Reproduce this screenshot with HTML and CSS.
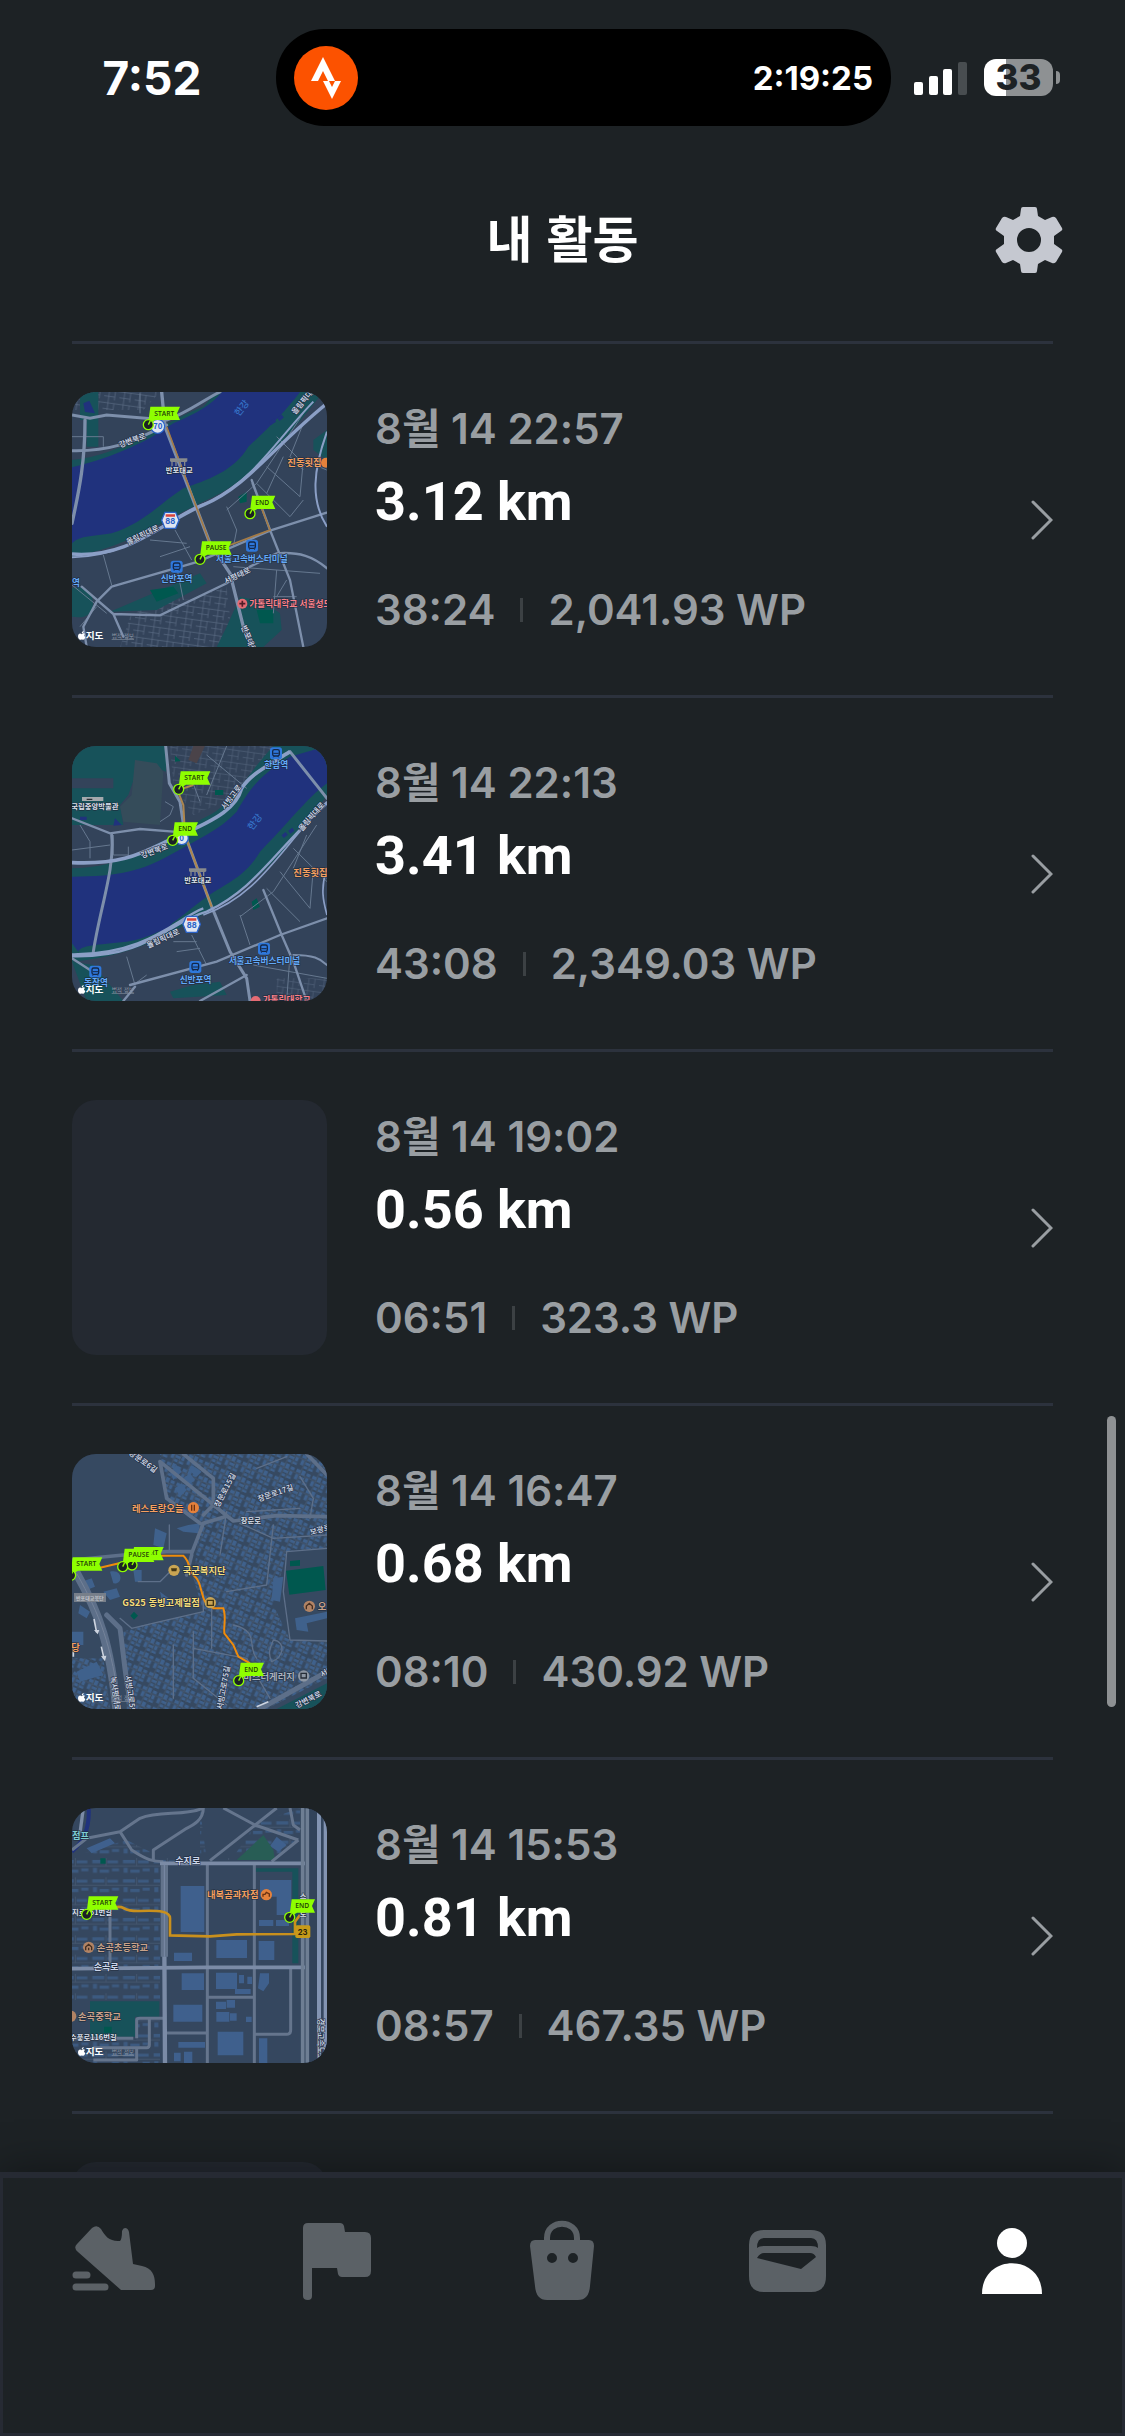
FILE: index.html
```html
<!DOCTYPE html>
<html lang="ko">
<head>
    <meta charset="UTF-8">
    <meta name="viewport" content="width=device-width, initial-scale=1.0">
    <title>내 활동</title>
    <link rel="stylesheet" href="styles.css">
</head>
<body>
    <!-- shared map parts -->
    <svg class="defs" aria-hidden="true">
        <defs>
            <g id="flag-long">
                <path d="M6-54H95L86-34L95-14H22L5-4L0-8Z" fill="#8eff00"/>
                <circle r="15" fill="#1c2124" stroke="#8eff00" stroke-width="4"/>
                <path d="M0 0L6-12" stroke="#8eff00" stroke-width="4"/>
            </g>
            <g id="flag-short">
                <path d="M6-54H76L67-34L76-14H22L5-4L0-8Z" fill="#8eff00"/>
                <circle r="15" fill="#1c2124" stroke="#8eff00" stroke-width="4"/>
                <path d="M0 0L6-12" stroke="#8eff00" stroke-width="4"/>
            </g>
            <g id="station">
                <rect x="-18" y="-18" width="36" height="36" rx="8" fill="#2f78dc"/>
                <rect x="-10" y="-11" width="20" height="19" rx="5" fill="none" stroke="#14284a" stroke-width="4"/>
                <path d="M-8 0H8M-8 12L-5 8M8 12L5 8" stroke="#14284a" stroke-width="3"/>
            </g>
            <g id="route88">
                <path d="M-16-24H16L26 0L16 24H-16L-26 0Z" fill="#dfe5f2" stroke="#2a62c8" stroke-width="4"/>
                <path d="M-14-18H14V-11H-14Z" fill="#d9453d"/>
                <text y="11" class="shield">88</text>
            </g>
            <g id="bridge-icon">
                <path d="M-24-9H24V-4H-24ZM-24-2H24M-20-4V12M-8-4V12M5-4V12M18-4V12" fill="#9b9d9f" stroke="#85888b" stroke-width="4"/>
            </g>
            <g id="apple-mark">
                <path d="M0-3C-4-8-11-5-11 3C-11 10-6 15-2 13C0 12 1 12 3 13C8 14 10 8 11 5C6 3 6-2 10-4C7-8 3-6 0-3ZM0-6C0-10 3-13 6-13C6-9 3-6 0-6Z" fill="#fff"/>
            </g>
            <pattern id="blocks" width="52" height="46" patternUnits="userSpaceOnUse" patternTransform="rotate(24)">
                <path d="M3 5h13v10H3zM20 3h11v14H20zM36 6h12v9H36zM5 21h9v16H5zM19 23h15v8H19zM38 20h9v12H38zM19 35h11v8H19zM35 36h13v7H35z" fill="#3f618c"/>
                <path d="M0 18H52M17 0V46M34 18V46" stroke="#54657c" stroke-width="2" opacity=".6"/>
            </pattern>
            <pattern id="houses" width="92" height="58" patternUnits="userSpaceOnUse">
                <path d="M5 6h36v10H5zM50 7h32v9H50zM7 30h12v14H7zM27 35h28v9H27zM64 31h21v9H64z" fill="#3f608b" opacity=".75"/>
                <path d="M0 24H92M46 0V24" stroke="#4a5b74" stroke-width="2"/>
            </pattern>
            <pattern id="lanes" width="46" height="38" patternUnits="userSpaceOnUse" patternTransform="rotate(8)">
                <path d="M0 10H46M14 0V38M0 28H32M32 10V38" stroke="#63758d" stroke-width="2" fill="none"/>
            </pattern>
        </defs>
    </svg>

    <div class="app">
        <div class="status-bar">
            <span class="clock">7:52</span>
            <div class="island">
                <svg class="island-logo" viewBox="0 0 64 64" aria-hidden="true">
                    <circle cx="32" cy="32" r="32" fill="#fc5200"/>
                    <path d="M29 11L41 35H34L29 25L24 35H17Z" fill="#fff"/>
                    <path d="M29 35H35L38 41L41 35H47L38 53Z" fill="#fff"/>
                </svg>
                <span class="island-time">2:19:25</span>
            </div>
            <svg class="signal" viewBox="0 0 54 34" aria-hidden="true">
                <rect y="21" width="9" height="13" rx="2" fill="#fff"/>
                <rect x="15" y="15" width="9" height="19" rx="2" fill="#fff"/>
                <rect x="29" y="8" width="9" height="26" rx="2" fill="#fff"/>
                <rect x="44" y="1" width="9" height="33" rx="2" fill="#484d50"/>
            </svg>
            <div class="battery"><span class="battery-level">33</span></div>
        </div>

        <header class="header">
            <h1>내 활동</h1>
            <button class="settings" type="button" aria-label="설정">
                <svg viewBox="0 0 66 66" aria-hidden="true">
                    <path fill="#c5c8d0" fill-rule="evenodd" d="M27 0H39Q41 0 41 2L42 9L49 13L56 10Q58 9 60 11L66 21Q67 23 65 24L58 29V37L65 42Q67 43 66 45L60 55Q58 57 56 56L49 53L42 57L41 64Q41 66 39 66H27Q25 66 25 64L24 57L17 53L10 56Q8 57 6 55L0 45Q-1 43 1 42L8 37V29L1 24Q-1 23 0 21L6 11Q8 9 10 10L17 13L24 9L25 2Q25 0 27 0ZM33 21A12 12 0 1 0 33 45A12 12 0 1 0 33 21Z"/>
                </svg>
            </button>
        </header>

        <main class="activities">
            <a class="activity" href="#">
                <svg class="thumb" viewBox="36 36 765 765" aria-hidden="true">
                    <path fill="#33435a" d="M36 36H801V801H36Z"/>
                    <path fill="url(#lanes)" d="M300 650L390 660L500 620L520 801H180L210 710ZM36 36H300L250 90H36Z" opacity=".8"/>
                    <path fill="#17525a" d="M36 240C190 225 300 130 430 80L470 36H790C700 150 580 300 440 360C310 420 210 500 36 530ZM60 36H115V200H80V120H60ZM36 625C80 610 110 650 95 690C80 720 50 710 36 710ZM150 695L420 580L440 610L290 690ZM500 740L540 650L610 665L660 700L665 750L610 801H470ZM760 180L801 150V240L760 210Z"/>
                    <path fill="#00584f" d="M270 630L340 620L355 640L290 665ZM535 350L560 335L560 365L540 370ZM590 690H640V730H600Z"/>
                    <path fill="#20327d" d="M36 262C170 230 270 180 340 130C410 100 455 75 485 36H720C680 90 620 150 565 200C520 275 440 300 370 325C300 370 250 430 155 460C100 470 60 465 36 490ZM70 70L88 62L105 100L75 96Z"/>
                    <path d="M630 130L645 120M655 118L668 108" stroke="#20327d" stroke-width="12"/>
                    <g fill="none" stroke="#66788f" stroke-width="3">
                        <path d="M240 40V100M36 170H130V200M130 525L155 615M345 450L395 540M500 380L530 450L520 500M500 390L590 310L730 100M590 310L690 410M620 260L720 350L730 240L800 270M650 170L740 260M670 230L620 340M690 410L730 360M575 310L630 445M730 130L690 230L730 270M270 480L380 490M300 530L390 500M520 560L780 580M650 570L640 700M640 650H710M680 600L650 650M36 615L140 700M60 740L110 680M350 560L370 660"/>
                    </g>
                    <g fill="none" stroke="#7d8fab" stroke-linecap="round">
                        <path d="M75 120C75 240 60 320 36 430M305 36L315 140L450 490L510 580L550 740L580 801" stroke-width="10"/>
                        <path d="M36 105L90 115L140 105L320 120C380 100 430 60 480 36M36 212C180 215 240 170 320 135" stroke-width="9"/>
                        <path d="M155 620L415 545L630 452L800 398M630 450L690 600L730 801M110 665L155 620M65 620L160 702L300 706L500 610L570 560M110 665L70 740L80 801M160 702L190 770M575 300L630 450M570 560L650 520C720 515 760 530 801 565" stroke-width="7"/>
                    </g>
                    <g fill="none" stroke="#8b9fc6">
                        <path d="M36 522C210 535 300 430 430 375C560 320 630 210 801 70" stroke-width="10"/>
                        <path d="M36 532C230 530 330 400 450 365C580 300 650 180 760 65M801 155C760 270 750 360 801 440" stroke-width="6"/>
                    </g>
                    <path d="M320 140L405 370L450 490M510 495L630 450L605 385" stroke="#a47b46" stroke-width="5" fill="none"/>
                    <text x="0" y="0" transform="translate(537 110) rotate(-52)" class="water">한강</text>
                    <text transform="translate(180 203) rotate(-20)" class="road">강변북로</text>
                    <text transform="translate(204 495) rotate(-26)" class="road">올림픽대로</text>
                    <text transform="translate(706 105) rotate(-51)" class="road">올림픽대</text>
                    <text transform="translate(497 612) rotate(-25)" class="road">서평대로</text>
                    <text transform="translate(543 740) rotate(68)" class="road">반포대로</text>
                    <use href="#bridge-icon" x="356" y="246"/>
                    <text x="317" y="280" class="place">반포대교</text>
                    <circle cx="293" cy="139" r="21" fill="#dfe5f2" stroke="#2a62c8" stroke-width="4"/>
                    <text x="293" y="147" class="shield">70</text>
                    <use href="#route88" x="331" y="421"/>
                    <use href="#station" x="576" y="497"/>
                    <text x="468" y="545" class="stop">서울고속버스터미널</text>
                    <use href="#station" x="350" y="560"/>
                    <text x="302" y="606" class="stop">신반포역</text>
                    <text x="36" y="618" class="stop">역</text>
                    <text x="682" y="258" class="food">진동횟집</text>
                    <circle cx="798" cy="248" r="15" fill="#e5813b"/>
                    <circle cx="547" cy="671" r="15" fill="#e56b74"/>
                    <path d="M538 671H556M547 662V680" stroke="#531c28" stroke-width="5"/>
                    <text x="568" y="682" class="hospital">가톨릭대학교 서울성모</text>
                    <use href="#flag-long" x="265" y="134"/>
                    <text x="283" y="108" class="pin">START</text>
                    <use href="#flag-short" x="570" y="401"/>
                    <text x="586" y="374" class="pin">END</text>
                    <use href="#flag-long" x="420" y="538"/>
                    <text x="437" y="510" class="pin">PAUSE</text>
                    <use href="#apple-mark" x="65" y="766"/>
                    <text x="77" y="777" class="brand">지도</text>
                    <text x="155" y="775" class="legal">법적 정보</text>
                </svg>
                <div class="info">
                    <p class="date">8월 14 22:57</p>
                    <p class="distance">3.12 km</p>
                    <p class="stats"><span>38:24</span><span class="bar"></span><span>2,041.93 WP</span></p>
                </div>
                <svg class="chevron" viewBox="0 0 22 40" aria-hidden="true"><path d="M2 2L20 20L2 38"/></svg>
            </a>

            <a class="activity" href="#">
                <svg class="thumb" viewBox="36 33 765 765" aria-hidden="true">
                    <path fill="#33435a" d="M36 33H801V798H36Z"/>
                    <path fill="url(#lanes)" d="M330 33H640L520 190L400 240L340 150ZM650 730H801V798H650Z" opacity=".6"/>
                    <path fill="#17525a" d="M36 33H318V110L240 80L205 180L180 210L190 270H36V160H160V130H36ZM36 400C190 400 300 320 430 250C520 210 550 130 640 33H801V180C720 300 610 430 480 510C350 580 250 660 36 680V400ZM36 680L100 690L190 798H80ZM330 770L400 750L480 740L500 780L340 790Z"/>
                    <path fill="#354c5a" d="M225 75L290 85L310 110L300 270L190 260L180 215L215 180Z"/>
                    <path fill="#4a4349" d="M400 33H435L410 85L385 75Z"/>
                    <path fill="#00584f" d="M575 500L590 490L600 515L580 525ZM465 165H490V180H465ZM345 62L362 78L345 80Z"/>
                    <path fill="#20327d" d="M36 425C180 425 250 405 330 360C400 320 480 285 530 230C570 160 600 120 690 65L801 33V145C740 190 680 270 600 350C560 420 510 440 440 485C340 560 310 600 200 620C110 630 60 630 55 650L36 625ZM225 605L340 560L320 585ZM60 245H80V255H60ZM165 250L185 270L160 272Z"/>
                    <path d="M668 305L680 295M688 292L700 283" stroke="#20327d" stroke-width="11"/>
                    <g fill="none" stroke="#66788f" stroke-width="3">
                        <path d="M36 345L150 330M60 270L90 320V370M160 300V360H205M205 335V370M200 665L225 750M395 600L440 690M315 200L340 215L330 240L300 260M390 120L420 200M440 60L560 160M500 33L440 180M540 540L570 630M540 545L640 470L770 270M620 460L720 560M660 410L750 520L760 400L801 430M700 340L801 440M740 300L700 400M340 620H410M350 650L420 640M580 690L801 730M220 750L260 720M690 660L680 798"/>
                    </g>
                    <g fill="none" stroke="#7d8fab" stroke-linecap="round">
                        <path d="M155 300C165 400 120 520 100 650M317 33L328 145L360 200L375 300L455 515L510 650L560 730L570 798M690 50L801 190" stroke-width="9"/>
                        <path d="M36 250L150 295L240 282L340 290M210 750L470 680L660 600L801 550M610 465L665 600L700 680L740 798M420 798L560 720M190 798L225 755M36 670L90 705" stroke-width="7"/>
                        <path d="M700 660C760 660 780 670 801 690" stroke-width="6"/>
                    </g>
                    <g fill="none" stroke="#8b9fc6">
                        <path d="M36 383C200 390 250 350 350 305C480 250 530 215 545 160C570 120 610 100 690 50" stroke-width="11"/>
                        <path d="M36 664C260 670 330 560 440 530C590 460 640 350 801 205M36 658C260 660 350 550 430 520" stroke-width="7"/>
                        <path d="M430 540C600 480 660 340 801 200M801 400C780 460 790 500 801 540" stroke-width="5"/>
                    </g>
                    <path d="M356 175L370 210L375 300L455 515M370 160L400 150" stroke="#ad864e" stroke-width="6" fill="none"/>
                    <text transform="translate(577 287) rotate(-53)" class="water">한강</text>
                    <text transform="translate(246 370) rotate(-20)" class="road">강변북로</text>
                    <text transform="translate(265 640) rotate(-25)" class="road">올림픽대로</text>
                    <text transform="translate(726 290) rotate(-49)" class="road">올림픽대로</text>
                    <text transform="translate(495 225) rotate(-53)" class="road">서빙고로</text>
                    <path d="M66 186H130V198H66Z" fill="#a4a9ad"/>
                    <path d="M80 191H97V195H80Z" fill="#2a2f35"/>
                    <text x="34" y="221" class="place">국립중앙박물관</text>
                    <use href="#bridge-icon" x="413" y="411"/>
                    <text x="373" y="444" class="place">반포대교</text>
                    <circle cx="365" cy="309" r="20" fill="#dfe5f2" stroke="#2a62c8" stroke-width="4"/>
                    <text x="365" y="317" class="shield">0</text>
                    <use href="#route88" x="395" y="568"/>
                    <use href="#station" x="648" y="55"/>
                    <text x="613" y="99" class="stop">한남역</text>
                    <use href="#station" x="612" y="641"/>
                    <text x="506" y="687" class="stop">서울고속버스터미널</text>
                    <use href="#station" x="406" y="696"/>
                    <text x="359" y="743" class="stop">신반포역</text>
                    <use href="#station" x="106" y="710"/>
                    <text x="72" y="754" class="stop">동작역</text>
                    <text x="700" y="423" class="food">진동횟집</text>
                    <circle cx="587" cy="798" r="15" fill="#e56b74"/>
                    <text x="608" y="805" class="hospital">가톨릭대학교</text>
                    <use href="#flag-long" x="356" y="163"/>
                    <text x="373" y="135" class="pin">START</text>
                    <use href="#flag-short" x="338" y="316"/>
                    <text x="355" y="288" class="pin">END</text>
                    <use href="#apple-mark" x="65" y="763"/>
                    <text x="77" y="774" class="brand">지도</text>
                    <text x="155" y="772" class="legal">법적 정보</text>
                </svg>
                <div class="info">
                    <p class="date">8월 14 22:13</p>
                    <p class="distance">3.41 km</p>
                    <p class="stats"><span>43:08</span><span class="bar"></span><span>2,349.03 WP</span></p>
                </div>
                <svg class="chevron" viewBox="0 0 22 40" aria-hidden="true"><path d="M2 2L20 20L2 38"/></svg>
            </a>

            <a class="activity" href="#">
                <div class="thumb"></div>
                <div class="info">
                    <p class="date">8월 14 19:02</p>
                    <p class="distance">0.56 km</p>
                    <p class="stats"><span>06:51</span><span class="bar"></span><span>323.3 WP</span></p>
                </div>
                <svg class="chevron" viewBox="0 0 22 40" aria-hidden="true"><path d="M2 2L20 20L2 38"/></svg>
            </a>

            <a class="activity" href="#">
                <svg class="thumb" viewBox="36 27 765 765" aria-hidden="true">
                    <path fill="#364961" d="M36 27H801V792H36Z"/>
                    <path fill="url(#blocks)" d="M300 27H801V310L680 320L640 480L690 585L801 590V700L620 792H200L190 560L250 540L430 500L400 400L420 240L320 170ZM36 640L130 640L150 792H36Z"/>
                    <path d="M330 80L350 60L365 80L340 105ZM370 100L390 85L405 105L380 125ZM345 130L365 115L380 135L360 155ZM395 60L425 80L410 95L385 75ZM285 250L320 265L310 310L280 300ZM350 250L385 240L420 235L415 265L370 260ZM150 380C190 370 190 420 160 415ZM220 375H245V410H225ZM60 480L90 500L80 520L55 505ZM65 410L95 400L105 425L80 435ZM130 440L170 430L180 455L150 465ZM300 440L340 470L310 485ZM705 520L801 500V520L740 535L745 560L710 555ZM640 400L670 395L660 470L635 465ZM36 560H70V600H36ZM50 680L110 650L130 690L60 710Z" fill="#3f618c"/>
                    <path d="M678 377L790 363L797 435L688 449ZM690 348L720 345V362L690 364ZM211 512L222 500L234 512L222 524Z" fill="#00584f"/>
                    <path d="M650 792L801 715V792Z" fill="#17525a"/>
                    <g fill="none" stroke="#5d6f89" stroke-linecap="round" stroke-linejoin="round">
                        <path d="M36 345L190 330L320 320H395M395 325L430 235M430 235L495 215M300 50L320 160L420 235M300 50L520 228L650 212L801 215M370 27L460 100V180L430 210M395 330L380 390M740 27L801 90" stroke-width="11"/>
                        <path d="M50 385C120 510 150 600 170 792" stroke-width="26"/>
                        <path d="M140 510L180 550C190 620 195 700 215 792M600 792L801 680" stroke-width="15"/>
                        <path d="M328 240V320M540 235L640 280L801 270M560 200L720 190M720 95L760 160L750 220M590 70L680 35M500 200L480 330M235 410H300L330 380M180 520L215 550L300 530L430 500V440M455 490V610M400 610L560 640L630 760M520 540C600 560 560 600 590 640M690 585L670 440L680 320L801 310M690 585L801 588M640 585C680 590 670 640 635 650C620 620 635 600 640 585M340 600V760M400 560V700L500 780M640 240L620 420L500 440" stroke-width="4"/>
                    </g>
                    <path d="M50 385C120 510 155 600 180 792" fill="none" stroke="#748299" stroke-width="3"/>
                    <path d="M102 522L110 562M124 605L132 640M40 610V635M590 785L625 770" stroke="#ccd3df" stroke-width="5" fill="none"/>
                    <path d="M102 555L118 555L113 568ZM123 634L139 632L135 649Z" fill="#ccd3df"/>
                    <path d="M120 368L190 352M300 332H370C390 350 385 370 400 390C425 410 420 440 435 470L460 490H490C500 520 490 540 493 565L520 600L535 635L570 655" stroke="#ef8b0b" stroke-width="6" fill="none"/>
                    <text transform="translate(205 27) rotate(36)" class="road">장문로6길</text>
                    <text transform="translate(476 188) rotate(-62)" class="road">장문로15길</text>
                    <text transform="translate(596 170) rotate(-19)" class="road">장문로17길</text>
                    <text x="542" y="233" class="place">장문로</text>
                    <text transform="translate(752 270) rotate(-15)" class="road">보광로</text>
                    <text transform="translate(151 695) rotate(82)" class="road">녹사평대로</text>
                    <text transform="translate(195 692) rotate(82)" class="road">서빙고로59길</text>
                    <text transform="translate(487 795) rotate(-80)" class="road">서빙고로75길</text>
                    <text transform="translate(711 790) rotate(-27)" class="road">강변북로</text>
                    <text transform="translate(786 697) rotate(-27)" class="road">서빙</text>
                    <text x="216" y="200" class="food">레스토랑오늘</text>
                    <circle cx="400" cy="188" r="17" fill="#e5813b"/>
                    <path d="M395 179V197M403 179V197" stroke="#6c3211" stroke-width="4"/>
                    <circle cx="342" cy="376" r="17" fill="#c9a553"/>
                    <path d="M333 370H351L349 379H335Z" fill="#443714"/>
                    <text x="368" y="386" class="shop">국군복지단</text>
                    <text x="187" y="484" class="shop">GS25 동빙고제일점</text>
                    <circle cx="451" cy="473" r="17" fill="#c9a553"/>
                    <path d="M442 466H460V481H442Z" fill="none" stroke="#443714" stroke-width="4"/>
                    <circle cx="748" cy="484" r="17" fill="#b18364"/>
                    <path d="M739 493V483L748 475L757 483V493" fill="none" stroke="#442e20" stroke-width="4"/>
                    <text x="773" y="494" class="school">오</text>
                    <path d="M42 444H138V471H42Z" fill="#777f8a"/>
                    <text x="48" y="465" class="tag">반포대교북단</text>
                    <text x="34" y="617" class="food">당</text>
                    <text x="550" y="705" class="garage">미스터게러지</text>
                    <circle cx="731" cy="693" r="17" fill="#8d96a3"/>
                    <path d="M723 685H739V699H723Z" fill="none" stroke="#272e38" stroke-width="4"/>
                    <use href="#flag-long" x="216" y="360"/>
                    <text x="271" y="331" class="pin">RT</text>
                    <use href="#flag-long" x="188" y="365"/>
                    <text x="205" y="336" class="pin">PAUSE</text>
                    <use href="#flag-long" x="32" y="391"/>
                    <text x="49" y="363" class="pin">START</text>
                    <use href="#flag-short" x="536" y="707"/>
                    <text x="553" y="680" class="pin">END</text>
                    <use href="#apple-mark" x="65" y="757"/>
                    <text x="77" y="768" class="brand">지도</text>
                    <text x="155" y="766" class="legal">법적 정보</text>
                </svg>
                <div class="info">
                    <p class="date">8월 14 16:47</p>
                    <p class="distance">0.68 km</p>
                    <p class="stats"><span>08:10</span><span class="bar"></span><span>430.92 WP</span></p>
                </div>
                <svg class="chevron" viewBox="0 0 22 40" aria-hidden="true"><path d="M2 2L20 20L2 38"/></svg>
            </a>

            <a class="activity" href="#">
                <svg class="thumb" viewBox="36 24 765 765" aria-hidden="true">
                    <path fill="#35475f" d="M36 24H801V789H36Z"/>
                    <path fill="url(#houses)" d="M90 24H420V170H300L200 120L36 170V600H300V190L440 170H520L590 70L720 24V120L640 180L440 180L420 24ZM230 660H300V789H36V720H230Z"/>
                    <g fill="#3f608d">
                        <path d="M362 258H433V396H362ZM469 420H561V474H469ZM596 423H643V480H596ZM365 520H432V570H365ZM468 518H531V567H468ZM340 614H427V665H340ZM473 695H550V766H473ZM600 240H694V345H650V290H600ZM597 360H640V378H597ZM648 360H687V378H648ZM342 458H396V483H342ZM468 605H498V627H468ZM500 600H525V623H500ZM469 636H508V665H469ZM510 640H530V662H510ZM558 650H575V666H558ZM537 525H552V550H537ZM562 530H576V552H562ZM525 567H572V582H525ZM600 520H627V550L610 574L594 565ZM355 726H435V743H355ZM342 758H362V784H342ZM372 755H397V789H372ZM597 715H622V789H597ZM650 110L680 135L655 155L630 138ZM80 145L150 115L165 130L95 160Z"/>
                    </g>
                    <path d="M587 205H715V490H697V215H587ZM90 604H298V650H225V710H90Z" fill="#17525a"/>
                    <path d="M530 180L610 105L640 150L645 180Z" fill="#285d55"/>
                    <path d="M121 175H137V191H121ZM132 680H155V698H132Z" fill="#00584f"/>
                    <path d="M86 24C90 90 65 130 36 155" fill="none" stroke="#20327d" stroke-width="12"/>
                    <g fill="none" stroke="#65758d" stroke-linejoin="round">
                        <path d="M442 190V789M583 190V789M445 592H583M320 699H445M583 703H680Q692 703 692 690V505M230 715V660Q230 655 240 655H310M268 655V735Q268 743 260 743H100M36 715H220M150 330V490M100 780H230V740" stroke-width="9"/>
                        <path d="M36 150L80 115L180 95L240 55C300 30 370 50 430 24M180 95L215 150C260 180 280 185 310 185M430 24C430 60 400 75 380 85L280 150V180M490 24L585 75L715 120M650 24L450 182M715 120L635 185M690 24L700 75L720 90" stroke-width="9"/>
                    </g>
                    <g fill="none" stroke="#7b8ba6">
                        <path d="M300 190H735M36 506L440 502H735" stroke-width="11"/>
                        <path d="M313 185V440L315 789" stroke-width="13"/>
                        <path d="M70 24L60 100" stroke-width="10"/>
                    </g>
                    <path d="M313 195V470" stroke="#62738b" stroke-width="22"/>
                    <path d="M313 195V470" stroke="#7b8ba6" stroke-width="3"/>
                    <path d="M728 24V789M742 24V789" stroke="#6e7e93" stroke-width="11"/>
                    <path d="M766 24V789" stroke="#32435a" stroke-width="34"/>
                    <path d="M777 24V789M797 24V789" stroke="#8394b2" stroke-width="12"/>
                    <path d="M165 322C200 315 180 335 240 333C300 330 330 335 330 355V406L450 409L530 403L705 402V365L720 345" stroke="#c9901d" stroke-width="8" fill="none"/>
                    <text x="36" y="118" class="spot">점프</text>
                    <text x="346" y="191" class="place-lg">수지로</text>
                    <text x="101" y="511" class="place-lg">손곡로</text>
                    <text x="36" y="345" class="place">지로161번길</text>
                    <text x="30" y="721" class="place">수풍로116번길</text>
                    <text transform="translate(773 655) rotate(90)" class="road">경부고속도로</text>
                    <text x="719" y="297" class="place">스</text>
                    <text x="719" y="349" class="place">로</text>
                    <text x="441" y="295" class="food">내복곰과자점</text>
                    <circle cx="619" cy="284" r="17" fill="#e5813b"/>
                    <path d="M609 290V283H615L619 277L628 282V290" fill="none" stroke="#6c3211" stroke-width="4"/>
                    <circle cx="86" cy="442" r="17" fill="#b18364"/>
                    <path d="M77 451V441L86 433L95 441V451M86 443V451" fill="none" stroke="#442e20" stroke-width="4"/>
                    <text x="110" y="453" class="school">손곡초등학교</text>
                    <circle cx="32" cy="649" r="17" fill="#b18364"/>
                    <text x="54" y="659" class="school">손곡중학교</text>
                    <rect x="706" y="376" width="45" height="38" rx="5" fill="#c79a19"/>
                    <text x="728" y="405" class="exit">23</text>
                    <use href="#flag-long" x="80" y="343"/>
                    <text x="97" y="315" class="pin">START</text>
                    <use href="#flag-short" x="689" y="352"/>
                    <text x="706" y="324" class="pin">END</text>
                    <use href="#apple-mark" x="65" y="754"/>
                    <text x="77" y="765" class="brand">지도</text>
                    <text x="155" y="763" class="legal">법적 정보</text>
                </svg>
                <div class="info">
                    <p class="date">8월 14 15:53</p>
                    <p class="distance">0.81 km</p>
                    <p class="stats"><span>08:57</span><span class="bar"></span><span>467.35 WP</span></p>
                </div>
                <svg class="chevron" viewBox="0 0 22 40" aria-hidden="true"><path d="M2 2L20 20L2 38"/></svg>
            </a>

            <a class="activity" href="#" aria-label="활동">
                <div class="thumb"></div>
            </a>
        </main>
        <div class="scrollbar"></div>

        <nav class="tabs">
            <a class="tab" href="#" aria-label="걷기">
                <svg viewBox="0 0 90 90" aria-hidden="true">
                    <path d="M9 26L24 10Q29 6 33 11C37 18 41 23 50 23H52Q54 21 54 13Q55 10 57 10Q60 10 61 14L65 46L74 48C84 50 87 57 87 66V68Q87 72 83 72H53L10 34Q5 30 9 26Z"/>
                    <path d="M8 57H19M8 69H37" stroke="currentColor" stroke-width="7" stroke-linecap="round"/>
                </svg>
            </a>
            <a class="tab" href="#" aria-label="챌린지">
                <svg viewBox="0 0 90 90" aria-hidden="true">
                    <path d="M10 10Q10 5 15 5H47Q50 5 51 8L52 14H72Q78 14 78 20V53Q78 59 72 59H49Q46 59 45 56L44 50H19V78Q19 82 15 82Q10 82 10 78Z"/>
                </svg>
            </a>
            <a class="tab" href="#" aria-label="상점">
                <svg viewBox="0 0 90 90" aria-hidden="true">
                    <path d="M29 23V20C29 1 59 1 59 20V23" fill="none" stroke="currentColor" stroke-width="6"/>
                    <path fill-rule="evenodd" d="M17 22H71Q76 22 76 28L72 68Q71 82 60 82H29Q18 82 17 68L12 28Q12 22 17 22ZM34 35A5 5 0 1 0 34 45A5 5 0 1 0 34 35ZM55 35A5 5 0 1 0 55 45A5 5 0 1 0 55 35Z"/>
                </svg>
            </a>
            <a class="tab" href="#" aria-label="지갑">
                <svg viewBox="0 0 90 90" aria-hidden="true">
                    <path fill-rule="evenodd" d="M21 12H68Q83 12 83 27V58Q83 74 68 74H21Q6 74 6 58V27Q6 12 21 12ZM21 20Q14 20 14 30Q16 28 21 28H68Q73 28 75 30Q75 20 68 20ZM21 35Q17 35 14 40L58 51L73 39Q71 35 67 35Z"/>
                </svg>
            </a>
            <a class="tab active" href="#" aria-label="내 활동">
                <svg viewBox="0 0 90 90" aria-hidden="true">
                    <circle cx="44" cy="25" r="15"/>
                    <path d="M14 76C14 35 74 35 74 76Z"/>
                </svg>
            </a>
        </nav>
    </div>
</body>
</html>
```
FILE: styles.css
```css
* {
    box-sizing: border-box;
}
body {
    margin: 0;
    background-color: #1d2225;
    color: #fff;
    font-family: Inter, "Noto Sans CJK KR", sans-serif;
}
.defs {
    position: absolute;
    width: 0;
    height: 0;
}
.app {
    position: relative;
    display: flex;
    flex-direction: column;
    height: 100vh;
    overflow: hidden;
}

/* status bar */
.status-bar {
    display: flex;
    align-items: center;
    padding: 29px 72px 19px 28px;
}
.clock {
    flex: 1;
    text-align: center;
    font-size: 46px;
    line-height: 52px;
    font-weight: 700;
}
.island {
    display: flex;
    align-items: center;
    justify-content: space-between;
    flex-shrink: 0;
    width: 60%;
    height: 97px;
    padding: 0 18px;
    margin-right: 23px;
    background-color: #000;
    border-radius: 48px;
}
.island-logo {
    width: 64px;
    height: 64px;
}
.island-time {
    font-size: 33px;
    font-weight: 700;
}
.signal {
    flex-shrink: 0;
    width: 54px;
    height: 34px;
    margin-right: 16px;
}
.battery {
    position: relative;
    flex-shrink: 0;
    width: 69px;
    height: 37px;
    border-radius: 12px;
    background: linear-gradient(90deg, #fff 22px, #8e9193 22px);
}
.battery::after {
    content: "";
    position: absolute;
    top: 12px;
    right: -7px;
    width: 4px;
    height: 13px;
    border-radius: 0 4px 4px 0;
    background-color: #8e9193;
}
.battery-level {
    display: block;
    text-align: center;
    font-size: 35px;
    line-height: 37px;
    font-weight: 800;
    color: #1d2225;
}

/* title */
.header {
    display: grid;
    grid-template-columns: 1fr auto 1fr;
    align-items: center;
    flex-shrink: 0;
    height: 190px;
    padding: 0 63px;
}
.header h1 {
    grid-column: 2;
    margin: 0;
    padding-bottom: 8px;
    font-family: "Noto Sans CJK KR", sans-serif;
    font-size: 50px;
    font-weight: 700;
}
.settings {
    justify-self: end;
    padding: 0;
    border: none;
    background: none;
    cursor: pointer;
}
.settings svg {
    display: block;
    width: 66px;
    height: 66px;
    overflow: visible;
}

/* activity list */
.activities {
    flex: 1;
    min-height: 0;
    overflow: hidden;
    padding: 6px 72px 0;
}
.activity {
    display: flex;
    align-items: center;
    gap: 48px;
    padding: 48px 0;
    border-top: 3px solid #2c323d;
    color: inherit;
    text-decoration: none;
}
.thumb {
    flex-shrink: 0;
    width: 255px;
    height: 255px;
    border-radius: 24px;
    background-color: #242931;
    overflow: hidden;
}
.info {
    flex: 1;
    align-self: stretch;
    display: flex;
    flex-direction: column;
    padding: 12px 0;
}
.info p {
    margin: 0;
}
.info .date,
.info .stats {
    color: #999ea2;
    font-size: 42px;
    line-height: 50px;
    font-weight: 600;
}
.info .distance {
    font-family: Roboto, sans-serif;
    font-size: 54px;
    line-height: 96px;
    font-weight: 700;
}
.info .stats {
    display: flex;
    align-items: center;
    gap: 25px;
    margin-top: auto;
}
.bar {
    width: 3px;
    height: 24px;
    background-color: #3c4144;
}
.chevron {
    width: 22px;
    height: 40px;
    fill: none;
    stroke: #999ea2;
    stroke-width: 3;
    stroke-linecap: round;
}
.scrollbar {
    position: absolute;
    top: 1416px;
    right: 9px;
    width: 9px;
    height: 291px;
    border-radius: 5px;
    background-color: #8e9193;
}

/* tab bar */
.tabs {
    position: relative;
    display: flex;
    align-items: flex-start;
    flex-shrink: 0;
    height: 264px;
    padding-top: 46px;
    background-color: #1d2225;
    box-shadow: inset 0 6px #262a33, inset 0 0 0 3px #262a33, 0 -4px 40px rgba(0, 0, 0, 0.35);
}
.tab {
    flex: 1;
    display: flex;
    justify-content: center;
    color: #5b6166;
}
.tab.active {
    color: #fff;
}
.tab svg {
    width: 90px;
    height: 90px;
    overflow: visible;
    fill: currentColor;
}

/* map labels */
.thumb text {
    font-family: "Noto Sans CJK KR", sans-serif;
    font-size: 24px;
    font-weight: 700;
    paint-order: stroke;
    stroke: #1c2738;
    stroke-width: 3px;
}
.thumb .road {
    font-size: 23px;
    font-weight: 700;
    fill: #c5cfe0;
}
.thumb .water {
    font-size: 28px;
    font-weight: 500;
    fill: #3674c8;
    stroke: none;
}
.thumb .place {
    font-size: 22px;
    fill: #dce2ee;
}
.thumb .place-lg {
    font-size: 27px;
    font-weight: 700;
    fill: #ccd6ea;
}
.thumb .stop {
    font-size: 26px;
    fill: #62a9f8;
}
.thumb .food {
    font-size: 28px;
    fill: #f5a060;
}
.thumb .hospital {
    font-size: 26px;
    fill: #fb818a;
}
.thumb .shop {
    font-size: 28px;
    fill: #f5dc7a;
}
.thumb .school {
    font-size: 28px;
    fill: #c9a38b;
}
.thumb .garage {
    font-size: 28px;
    fill: #a9b1bd;
}
.thumb .spot {
    font-size: 28px;
    fill: #7dccd2;
}
.thumb .tag {
    font-size: 15px;
    fill: #c0c4ca;
    stroke: none;
}
.thumb .pin {
    font-family: "Open Sans", sans-serif;
    font-size: 20px;
    font-weight: 600;
    fill: #24400a;
    stroke: none;
}
.thumb .brand {
    font-size: 29px;
    font-weight: 700;
    fill: #fff;
    stroke: none;
}
.thumb .legal {
    font-size: 17px;
    font-weight: 400;
    fill: #8a95a3;
    stroke: none;
    text-decoration: underline;
}
.shield,
.thumb .exit {
    font-family: Inter, sans-serif;
    font-size: 23px;
    font-weight: 700;
    text-anchor: middle;
    stroke: none;
}
.shield,
.thumb .shield {
    fill: #2a62c8;
    stroke: none;
}
.thumb .exit {
    fill: #2a230c;
}
```
